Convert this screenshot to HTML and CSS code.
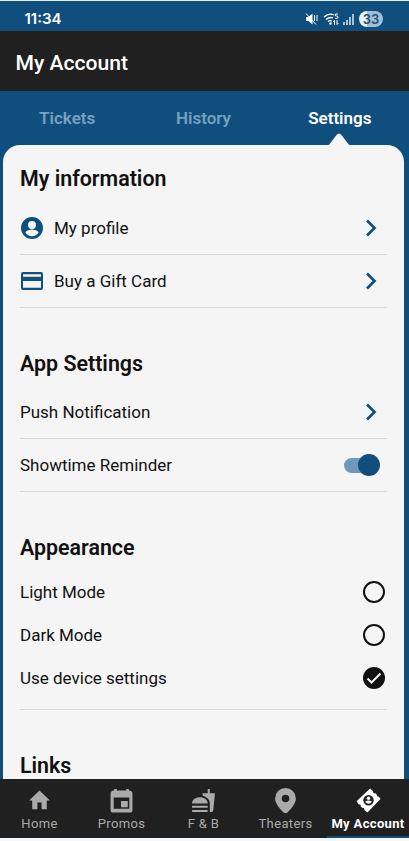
FILE: index.html
```html
<!DOCTYPE html>
<html lang="en">
<head>
<meta charset="utf-8">
<title>My Account</title>
<link rel="stylesheet" href="styles.css">
</head>
<body>
<div class="phone">
  <div class="status">
    <span class="time">11:34</span>
    <div class="indicators">
      <svg class="mute" viewBox="0 0 13 14"><path d="M1 5h2.500L7.500 1.500v11L3.500 9H1z" fill="currentColor"/><path d="M1 1.500l10 11M9 3l1 1-1 1 1 1-1 1 1 1-1 1M11.500 3l1 1-1 1 1 1-1 1 1 1-1 1" fill="none" stroke="currentColor"/></svg>
      <svg class="wifi" viewBox="0 0 17 14"><path d="M1 5Q6 .5 11 3M3 7.500Q6.500 4.500 10 6M5 9.500Q7 8 9 9" fill="none" stroke="currentColor" stroke-width="1.300"/><circle cx="7.500" cy="11.500" r="1.200" fill="currentColor"/><path d="M15 2h-2.500v2H14q1 0 1 1.200T14 6.500h-1.700M11.500 13V8.500L10 10M14 8v4.500l1.500-1.500" fill="none" stroke="currentColor"/></svg>
      <svg class="signal" viewBox="0 0 11 12"><path d="M1 9v3M4 7v5M7 4v8M10 1v11" stroke="currentColor" stroke-width="1.300"/></svg>
      <span class="battery">33</span>
    </div>
  </div>
  <header class="header">My Account</header>
  <nav class="tabs">
    <span class="tab">Tickets</span>
    <span class="tab">History</span>
    <span class="tab active">Settings<svg class="pointer" viewBox="0 0 22 12"><path d="M0 12Q1 12 2 10.500L8.500 2Q11-1 13.500 2L20 10.500Q21 12 22 12z" fill="currentColor"/></svg></span>
  </nav>
  <main class="card">
    <section class="group info">
      <h2>My information</h2>
      <div class="row">
        <svg class="lead" viewBox="0 0 24 24"><path fill="currentColor" d="M12 1a11 11 0 1 0 0 22 11 11 0 0 0 0-22zm0 4a4 4 0 1 1 0 8 4 4 0 0 1 0-8zm0 15.200c-2.600 0-5-1.400-6.500-3.500.2-2.200 4.300-3.300 6.500-3.300s6.300 1.100 6.500 3.300A8 8 0 0 1 12 20.200z"/></svg>
        <span>My profile</span>
        <svg class="chevron" viewBox="0 0 12 18"><path d="M2 1.500L9.500 9 2 16.500"/></svg>
      </div>
      <div class="row">
        <svg class="lead" viewBox="0 0 24 24"><path fill="currentColor" fill-rule="evenodd" d="M3 3h18a2 2 0 0 1 2 2v14a2 2 0 0 1-2 2H3a2 2 0 0 1-2-2V5a2 2 0 0 1 2-2zm0 2.300v2.500h18V5.300zM3 12v6.800h18V12z"/></svg>
        <span>Buy a Gift Card</span>
        <svg class="chevron" viewBox="0 0 12 18"><path d="M2 1.500L9.500 9 2 16.500"/></svg>
      </div>
    </section>
    <section class="group">
      <h2>App Settings</h2>
      <div class="row">
        <span>Push Notification</span>
        <svg class="chevron" viewBox="0 0 12 18"><path d="M2 1.500L9.500 9 2 16.500"/></svg>
      </div>
      <div class="row">
        <span>Showtime Reminder</span>
        <span class="switch"><span class="knob"></span></span>
      </div>
    </section>
    <section class="group">
      <h2>Appearance</h2>
      <div class="options">
        <div class="option"><span>Light Mode</span><span class="radio"></span></div>
        <div class="option"><span>Dark Mode</span><span class="radio"></span></div>
        <div class="option"><span>Use device settings</span><span class="radio checked"><svg viewBox="0 0 22 22"><path d="M4.500 11.500l4 4 9-9" fill="none" stroke="currentColor" stroke-width="2"/></svg></span></div>
      </div>
    </section>
    <section class="group">
      <h2>Links</h2>
    </section>
  </main>
  <nav class="bottom">
    <div class="item"><svg viewBox="0 0 24 24"><path fill="currentColor" d="M10 20.500v-6.500h4v6.500h5V12h3L12 2.500 2 12h3v8.500z"/></svg><span>Home</span></div>
    <div class="item"><svg viewBox="0 0 24 24"><path fill="currentColor" fill-rule="evenodd" d="M5 1h2.500v1.500h9V1H19v1.500a3 3 0 0 1 3.500 3V21a2.500 2.500 0 0 1-2.500 2.500H4A2.500 2.500 0 0 1 1.500 21V5.500a3 3 0 0 1 3.500-3zM4.500 9v11h15V9zM11.500 12.500H18V18.500h-6.500z"/></svg><span>Promos</span></div>
    <div class="item"><svg viewBox="0 0 24 24"><path fill="currentColor" d="M18.060 22.990h1.660c.84 0 1.530-.64 1.630-1.460L23 5.050h-5V1h-1.970v4.050h-4.970l.3 2.340c1.710.47 3.310 1.320 4.270 2.260 1.440 1.420 2.430 2.890 2.430 5.290v8.050zM1 21.990V21h15.030v.99c0 .55-.45 1-1.010 1H2.010c-.56 0-1.010-.45-1.010-1zm15.030-7c0-8-15.030-8-15.030 0h15.030zM1.020 17h15v2h-15z"/></svg><span>F &amp; B</span></div>
    <div class="item"><svg viewBox="0 0 24 24"><path fill="currentColor" fill-rule="evenodd" d="M12 0a10 10 0 0 0-10 10c0 7 10 15 10 15s10-8 10-15A10 10 0 0 0 12 0zm0 6.400a3.600 3.600 0 1 1 0 7.200 3.600 3.600 0 0 1 0-7.200z"/></svg><span>Theaters</span></div>
    <div class="item current"><svg viewBox="0 0 24 24"><path fill="currentColor" d="M13.500.5L16.500 3Q16 5 18.500 5L20 6.500Q19.800 8.500 22 8.500L23.500 10.500 11 23.500 8 21Q8.500 19 5.800 19L4.500 17.500Q5 15.500 2.500 15.500L.5 12.800z"/><circle cx="12" cy="11.800" r="5" fill="#202020"/><circle cx="12" cy="9.900" r="1.700" fill="currentColor"/><path d="M8.700 13.200q3.300-2.500 6.600 0-3.300 4-6.600 0" fill="currentColor"/></svg><span>My Account</span></div>
  </nav>
</div>
</body>
</html>
```
FILE: styles.css
```css
* { box-sizing: border-box; }
body { margin: 0; background: #f5f6f8; font-family: Roboto, sans-serif; color: #111; }
svg { display: block; flex: none; }
.phone { width: 409px; height: 841px; display: flex; flex-direction: column; background: #104e7d; border-top: 1px solid #e5f2f8; border-bottom: 3px solid #f5f6f8; overflow: hidden; }
.status { height: 30px; flex: none; display: flex; align-items: center; justify-content: space-between; padding: 5px 26px 0 24.5px; color: #fff; }
.time { font: 600 15px/18px Inter, sans-serif; }
.indicators { display: flex; align-items: center; }
.mute { width: 13px; height: 14px; }
.wifi { width: 17px; height: 14px; margin-left: 5px; }
.signal { width: 11px; height: 12px; margin-left: 3px; }
.battery { width: 24px; height: 16px; margin-left: 5px; border-radius: 8px; background: linear-gradient(90deg, #e6f3fa 33%, #a0c0d5 33%); color: #1d5078; font: 600 13px/16px Inter, sans-serif; text-align: center; }
.header { height: 60px; flex: none; background: #202020; color: #fff; font-size: 21.1px; font-weight: 500; line-height: 63px; padding-left: 15.5px; }
.tabs { height: 54px; flex: none; display: flex; }
.tab { flex: 1; text-align: center; font-size: 17px; font-weight: 600; line-height: 54px; color: #75a1c0; padding-right: 2px; }
.tab.active { position: relative; color: #fff; }
.pointer { position: absolute; width: 22px; height: 12px; bottom: 0; left: 55px; color: #f5f5f5; }
.card { flex: 1; min-height: 0; overflow: hidden; margin: 0 5px 0 3px; padding: 0 17px; border-radius: 17px 17px 0 0; background: #f5f5f5; }
.group { padding-top: 31px; }
.group.info { padding-top: 9px; }
h2 { margin: 0; height: 47px; font-size: 21.400px; font-weight: 600; line-height: 49px; }
.info h2 { height: 48px; line-height: 50px; }
.row { height: 53px; display: flex; align-items: center; border-bottom: 1px solid #d9d9d9; font-size: 17px; }
.lead { width: 24px; height: 24px; margin-right: 10px; color: #104e7d; }
.chevron { width: 12px; height: 18px; margin: 0 10px 0 auto; fill: none; stroke: #104e7d; stroke-width: 2.700; }
.switch { width: 36px; height: 22px; margin: 0 7px 0 auto; position: relative; display: flex; align-items: center; justify-content: flex-end; }
.switch::before { content: ""; position: absolute; left: 0; top: 3.5px; width: 30px; height: 15px; border-radius: 7.5px; background: #6f9abb; }
.knob { position: relative; width: 22px; height: 22px; border-radius: 50%; background: #104e7d; }
.options { height: 140px; border-bottom: 1px solid #d9d9d9; }
.option { height: 43.3px; display: flex; align-items: center; justify-content: space-between; font-size: 17px; }
.radio { width: 22px; height: 22px; margin-right: 2px; border: 2px solid #111; border-radius: 50%; }
.radio.checked { border: 0; background: #111; color: #f5f5f5; }
.bottom { height: 59px; flex: none; background: #202020; display: flex; color: #aaa; }
.item { width: 82px; flex: none; display: flex; flex-direction: column; align-items: center; padding: 9px 3px 0 0; font-size: 13px; line-height: 22px; letter-spacing: .35px; white-space: nowrap; }
.item svg { width: 25px; height: 25px; }
.item.current { padding-right: 0; margin-left: -1px; letter-spacing: .35px; color: #fff; font-weight: 700; border-bottom: 2px solid #104e7d; }
.item.current { width: 82px; }
```
